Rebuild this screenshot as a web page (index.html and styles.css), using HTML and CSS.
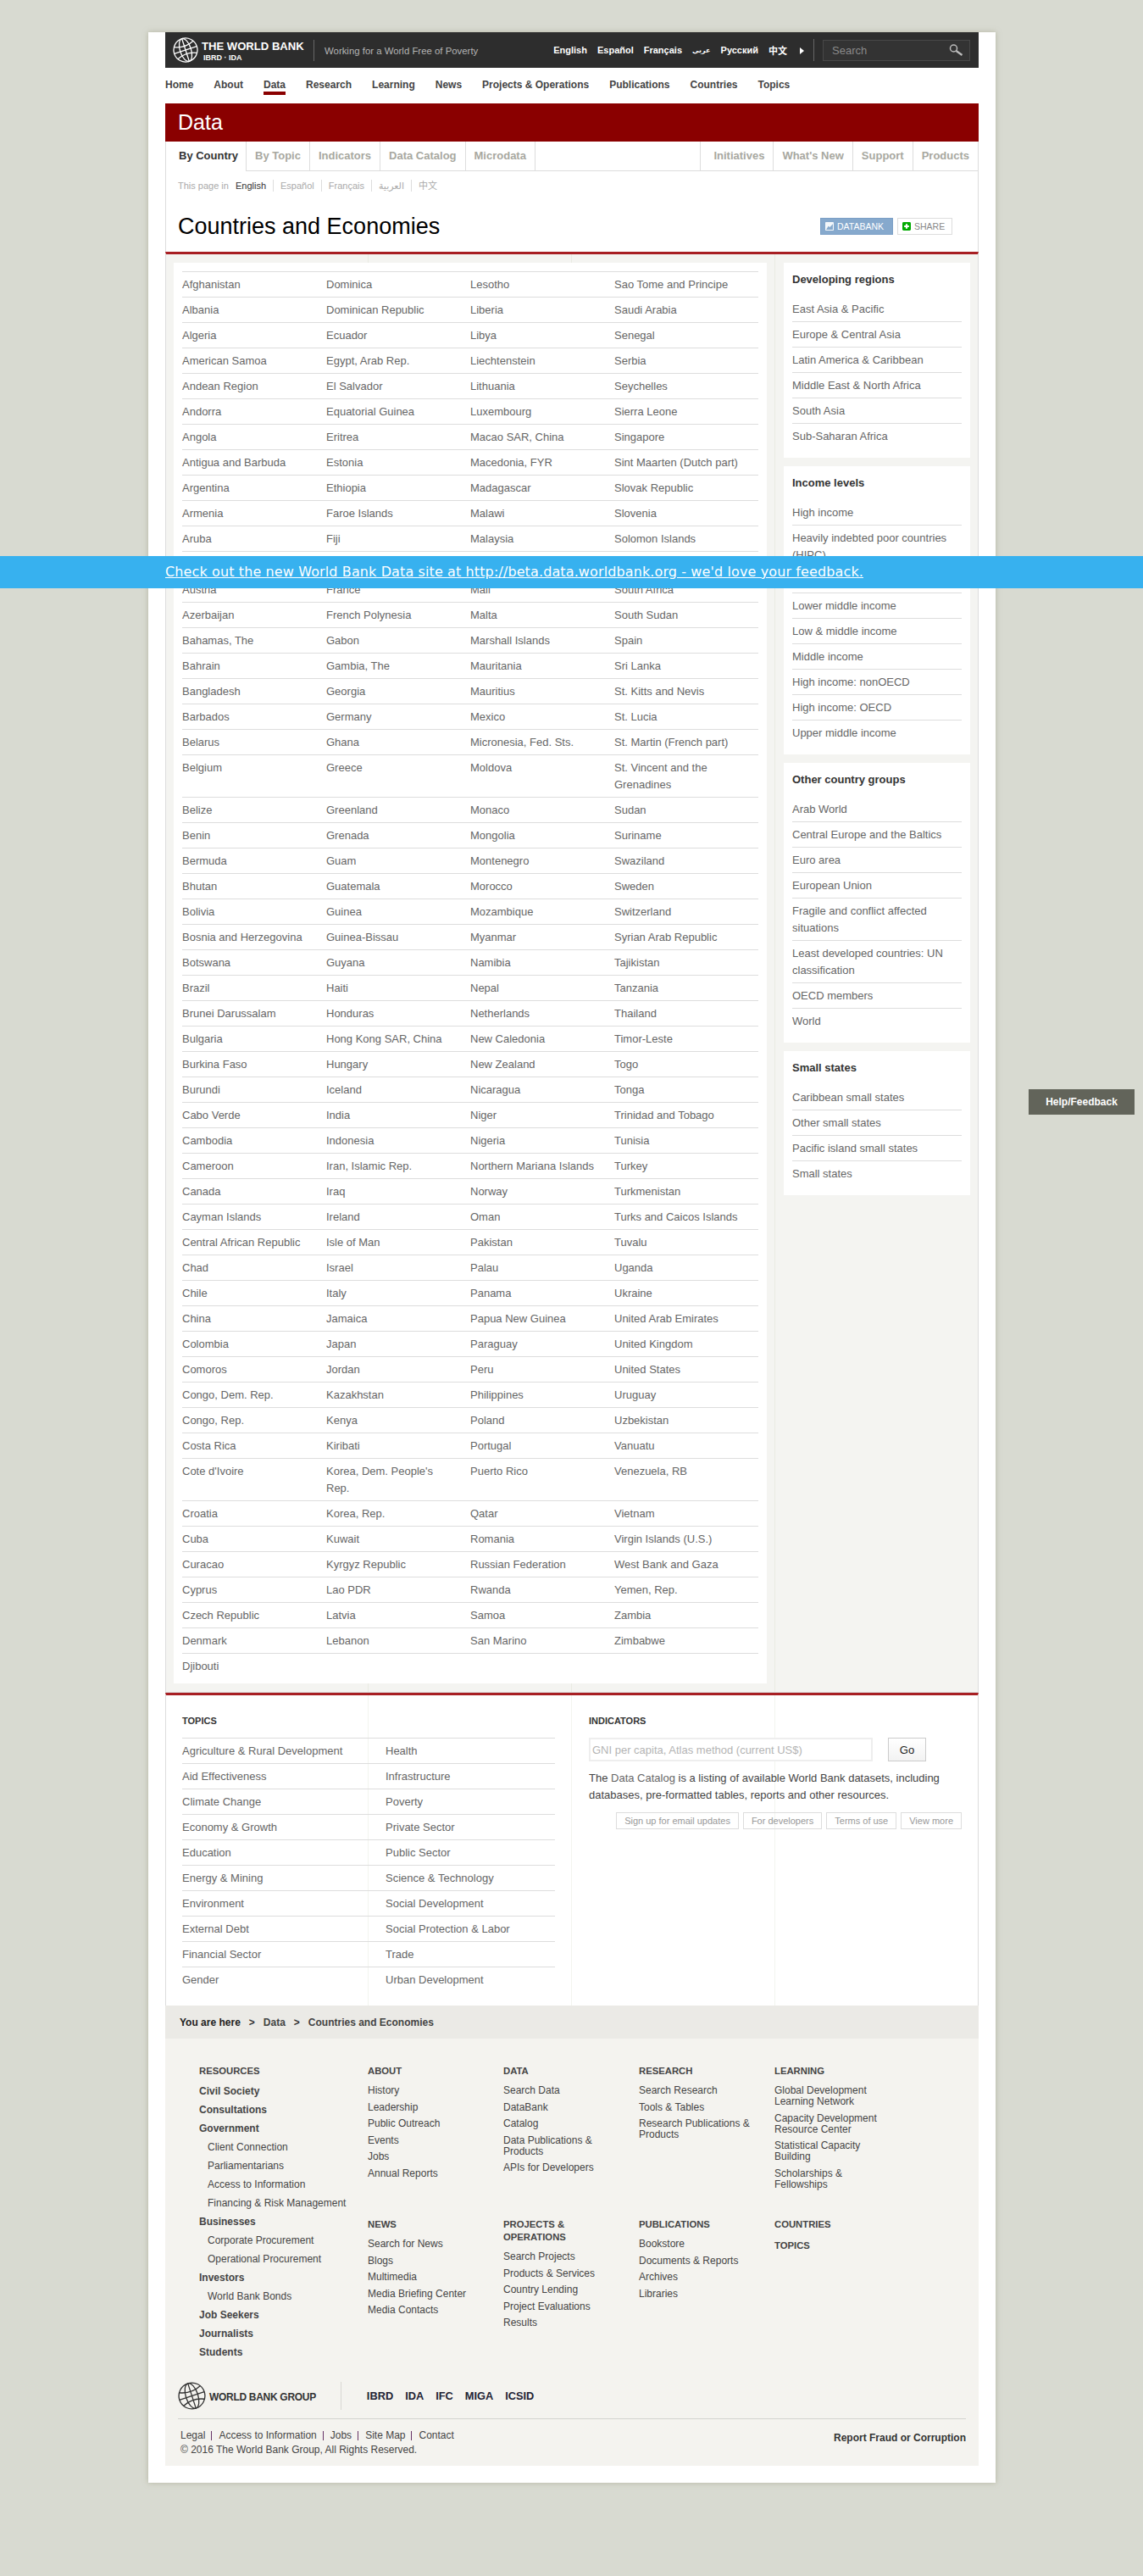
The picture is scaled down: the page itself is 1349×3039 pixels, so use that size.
FILE: index.html
```html
<!DOCTYPE html>
<html lang="en">
<head>
<meta charset="utf-8">
<title>Countries and Economies | Data</title>
<link rel="stylesheet" href="styles.css">
</head>
<body>
<div class="wrapper">
  <header class="topbar">
    <svg class="globe-w" width="30" height="30" viewBox="0 0 30 30"><g fill="none" stroke="#fff" stroke-width="1.3" transform="rotate(-18 15 15)"><circle cx="15" cy="15" r="14"/><ellipse cx="15" cy="15" rx="6.5" ry="14"/><path d="M15 1V29M3 7.500Q15 13 27 7.500M1 15H29M3 22.500Q15 17 27 22.500"/></g></svg>
    <div class="brand"><div class="brand-name">THE WORLD BANK</div><div class="brand-sub">IBRD · IDA</div></div>
    <div class="tagline">Working for a World Free of Poverty</div>
    <nav class="langs">
      <a>English</a><a>Español</a><a>Français</a><a class="ar">عربي</a><a>Русский</a><a>中文</a>
      <span class="more"></span>
    </nav>
    <div class="searchbox"><span>Search</span>
      <svg width="17" height="14" viewBox="0 0 17 14"><circle cx="5.500" cy="5" r="4" fill="none" stroke="#bbb" stroke-width="1.500"/><path d="M8.500 8L15.500 13" stroke="#bbb" stroke-width="2.200" fill="none"/></svg>
    </div>
  </header>
  <nav class="mainnav">
    <a>Home</a><a>About</a><a class="on">Data</a><a>Research</a><a>Learning</a><a>News</a><a>Projects &amp; Operations</a><a>Publications</a><a>Countries</a><a>Topics</a>
  </nav>
  <div class="sitebar">Data</div>
  <nav class="tabs">
    <a class="tab active">By Country</a><a class="tab">By Topic</a><a class="tab">Indicators</a><a class="tab">Data Catalog</a><a class="tab">Microdata</a>
    <span class="tabs-fill"></span>
    <a class="tab rt first">Initiatives</a><a class="tab rt">What's New</a><a class="tab rt">Support</a><a class="tab rt">Products</a>
  </nav>
  <div class="pagehead">
    <div class="pagelangs"><span class="pl-label">This page in</span><b>English</b><a>Español</a><a>Français</a><a>العربية</a><a class="nobar">中文</a></div>
    <div class="titlerow">
      <h1>Countries and Economies</h1>
      <div class="actions">
        <a class="btn-databank"><svg width="10" height="10" viewBox="0 0 14 14"><rect x="0" y="0" width="14" height="14" rx="1" fill="#fff" opacity=".9"/><path d="M1.500 12.500L5 6.500L7.500 8.500L12.500 3V12.500Z" fill="#86a9cd"/></svg>DATABANK</a>
        <a class="btn-share"><svg width="10" height="10" viewBox="0 0 14 14"><rect width="14" height="14" rx="2" fill="#0a0"/><path d="M7 3V11M3 7H11" stroke="#fff" stroke-width="3"/></svg>SHARE</a>
      </div>
    </div>
  </div>
  <main class="content">
    <section class="panel">
      <ul class="countries">
        <li>Afghanistan</li><li>Dominica</li><li>Lesotho</li><li>Sao Tome and Principe</li>
        <li>Albania</li><li>Dominican Republic</li><li>Liberia</li><li>Saudi Arabia</li>
        <li>Algeria</li><li>Ecuador</li><li>Libya</li><li>Senegal</li>
        <li>American Samoa</li><li>Egypt, Arab Rep.</li><li>Liechtenstein</li><li>Serbia</li>
        <li>Andean Region</li><li>El Salvador</li><li>Lithuania</li><li>Seychelles</li>
        <li>Andorra</li><li>Equatorial Guinea</li><li>Luxembourg</li><li>Sierra Leone</li>
        <li>Angola</li><li>Eritrea</li><li>Macao SAR, China</li><li>Singapore</li>
        <li>Antigua and Barbuda</li><li>Estonia</li><li>Macedonia, FYR</li><li>Sint Maarten (Dutch part)</li>
        <li>Argentina</li><li>Ethiopia</li><li>Madagascar</li><li>Slovak Republic</li>
        <li>Armenia</li><li>Faroe Islands</li><li>Malawi</li><li>Slovenia</li>
        <li>Aruba</li><li>Fiji</li><li>Malaysia</li><li>Solomon Islands</li>
        <li>Australia</li><li>Finland</li><li>Maldives</li><li>Somalia</li>
        <li>Austria</li><li>France</li><li>Mali</li><li>South Africa</li>
        <li>Azerbaijan</li><li>French Polynesia</li><li>Malta</li><li>South Sudan</li>
        <li>Bahamas, The</li><li>Gabon</li><li>Marshall Islands</li><li>Spain</li>
        <li>Bahrain</li><li>Gambia, The</li><li>Mauritania</li><li>Sri Lanka</li>
        <li>Bangladesh</li><li>Georgia</li><li>Mauritius</li><li>St. Kitts and Nevis</li>
        <li>Barbados</li><li>Germany</li><li>Mexico</li><li>St. Lucia</li>
        <li>Belarus</li><li>Ghana</li><li>Micronesia, Fed. Sts.</li><li>St. Martin (French part)</li>
        <li>Belgium</li><li>Greece</li><li>Moldova</li><li>St. Vincent and the Grenadines</li>
        <li>Belize</li><li>Greenland</li><li>Monaco</li><li>Sudan</li>
        <li>Benin</li><li>Grenada</li><li>Mongolia</li><li>Suriname</li>
        <li>Bermuda</li><li>Guam</li><li>Montenegro</li><li>Swaziland</li>
        <li>Bhutan</li><li>Guatemala</li><li>Morocco</li><li>Sweden</li>
        <li>Bolivia</li><li>Guinea</li><li>Mozambique</li><li>Switzerland</li>
        <li>Bosnia and Herzegovina</li><li>Guinea-Bissau</li><li>Myanmar</li><li>Syrian Arab Republic</li>
        <li>Botswana</li><li>Guyana</li><li>Namibia</li><li>Tajikistan</li>
        <li>Brazil</li><li>Haiti</li><li>Nepal</li><li>Tanzania</li>
        <li>Brunei Darussalam</li><li>Honduras</li><li>Netherlands</li><li>Thailand</li>
        <li>Bulgaria</li><li>Hong Kong SAR, China</li><li>New Caledonia</li><li>Timor-Leste</li>
        <li>Burkina Faso</li><li>Hungary</li><li>New Zealand</li><li>Togo</li>
        <li>Burundi</li><li>Iceland</li><li>Nicaragua</li><li>Tonga</li>
        <li>Cabo Verde</li><li>India</li><li>Niger</li><li>Trinidad and Tobago</li>
        <li>Cambodia</li><li>Indonesia</li><li>Nigeria</li><li>Tunisia</li>
        <li>Cameroon</li><li>Iran, Islamic Rep.</li><li>Northern Mariana Islands</li><li>Turkey</li>
        <li>Canada</li><li>Iraq</li><li>Norway</li><li>Turkmenistan</li>
        <li>Cayman Islands</li><li>Ireland</li><li>Oman</li><li>Turks and Caicos Islands</li>
        <li>Central African Republic</li><li>Isle of Man</li><li>Pakistan</li><li>Tuvalu</li>
        <li>Chad</li><li>Israel</li><li>Palau</li><li>Uganda</li>
        <li>Chile</li><li>Italy</li><li>Panama</li><li>Ukraine</li>
        <li>China</li><li>Jamaica</li><li>Papua New Guinea</li><li>United Arab Emirates</li>
        <li>Colombia</li><li>Japan</li><li>Paraguay</li><li>United Kingdom</li>
        <li>Comoros</li><li>Jordan</li><li>Peru</li><li>United States</li>
        <li>Congo, Dem. Rep.</li><li>Kazakhstan</li><li>Philippines</li><li>Uruguay</li>
        <li>Congo, Rep.</li><li>Kenya</li><li>Poland</li><li>Uzbekistan</li>
        <li>Costa Rica</li><li>Kiribati</li><li>Portugal</li><li>Vanuatu</li>
        <li>Cote d'Ivoire</li><li>Korea, Dem. People's Rep.</li><li>Puerto Rico</li><li>Venezuela, RB</li>
        <li>Croatia</li><li>Korea, Rep.</li><li>Qatar</li><li>Vietnam</li>
        <li>Cuba</li><li>Kuwait</li><li>Romania</li><li>Virgin Islands (U.S.)</li>
        <li>Curacao</li><li>Kyrgyz Republic</li><li>Russian Federation</li><li>West Bank and Gaza</li>
        <li>Cyprus</li><li>Lao PDR</li><li>Rwanda</li><li>Yemen, Rep.</li>
        <li>Czech Republic</li><li>Latvia</li><li>Samoa</li><li>Zambia</li>
        <li>Denmark</li><li>Lebanon</li><li>San Marino</li><li>Zimbabwe</li>
        <li class="lastrow">Djibouti</li>
      </ul>
    </section>
    <aside class="sidebar">
      <div class="sidebox">
        <h3>Developing regions</h3>
        <ul>
          <li>East Asia &amp; Pacific</li><li>Europe &amp; Central Asia</li><li>Latin America &amp; Caribbean</li><li>Middle East &amp; North Africa</li><li>South Asia</li><li>Sub-Saharan Africa</li>
        </ul>
      </div>
      <div class="sidebox">
        <h3>Income levels</h3>
        <ul>
          <li>High income</li><li>Heavily indebted poor countries (HIPC)</li><li>Low income</li><li>Lower middle income</li><li>Low &amp; middle income</li><li>Middle income</li><li>High income: nonOECD</li><li>High income: OECD</li><li>Upper middle income</li>
        </ul>
      </div>
      <div class="sidebox">
        <h3>Other country groups</h3>
        <ul>
          <li>Arab World</li><li>Central Europe and the Baltics</li><li>Euro area</li><li>European Union</li><li>Fragile and conflict affected situations</li><li>Least developed countries: UN classification</li><li>OECD members</li><li>World</li>
        </ul>
      </div>
      <div class="sidebox">
        <h3>Small states</h3>
        <ul>
          <li>Caribbean small states</li><li>Other small states</li><li>Pacific island small states</li><li>Small states</li>
        </ul>
      </div>
    </aside>
  </main>
  <section class="lower">
    <div class="topics">
      <h2>TOPICS</h2>
      <ul class="topiclist">
        <li>Agriculture &amp; Rural Development</li><li>Health</li>
        <li>Aid Effectiveness</li><li>Infrastructure</li>
        <li>Climate Change</li><li>Poverty</li>
        <li>Economy &amp; Growth</li><li>Private Sector</li>
        <li>Education</li><li>Public Sector</li>
        <li>Energy &amp; Mining</li><li>Science &amp; Technology</li>
        <li>Environment</li><li>Social Development</li>
        <li>External Debt</li><li>Social Protection &amp; Labor</li>
        <li>Financial Sector</li><li>Trade</li>
        <li>Gender</li><li>Urban Development</li>
      </ul>
    </div>
    <div class="indicators">
      <h2>INDICATORS</h2>
      <div class="indform">
        <input class="indinput" type="text" placeholder="GNI per capita, Atlas method (current US$)">
        <button class="gobtn" type="button">Go</button>
      </div>
      <p class="indtext">The <a>Data Catalog</a> is a listing of available World Bank datasets, including databases, pre-formatted tables, reports and other resources.</p>
      <div class="indlinks"><a>Sign up for email updates</a><a>For developers</a><a>Terms of use</a><a>View more</a></div>
    </div>
  </section>
  <div class="crumbs"><b>You are here</b><i>&gt;</i><a>Data</a><i>&gt;</i><a>Countries and Economies</a></div>
  <footer class="footer">
    <div class="fcols">
      <div class="fres">
        <h4>RESOURCES</h4>
        <ul>
          <li class="b">Civil Society</li><li class="b">Consultations</li><li class="b">Government</li>
          <li class="s">Client Connection</li><li class="s">Parliamentarians</li><li class="s">Access to Information</li><li class="s">Financing &amp; Risk Management</li>
          <li class="b">Businesses</li><li class="s">Corporate Procurement</li><li class="s">Operational Procurement</li>
          <li class="b">Investors</li><li class="s">World Bank Bonds</li>
          <li class="b">Job Seekers</li><li class="b">Journalists</li><li class="b">Students</li>
        </ul>
      </div>
      <div class="fgrid">
        <div class="fcol"><h4>ABOUT</h4><ul><li>History</li><li>Leadership</li><li>Public Outreach</li><li>Events</li><li>Jobs</li><li>Annual Reports</li></ul></div>
        <div class="fcol"><h4>DATA</h4><ul><li>Search Data</li><li>DataBank</li><li>Catalog</li><li>Data Publications &amp; Products</li><li>APIs for Developers</li></ul></div>
        <div class="fcol"><h4>RESEARCH</h4><ul><li>Search Research</li><li>Tools &amp; Tables</li><li>Research Publications &amp; Products</li></ul></div>
        <div class="fcol"><h4>LEARNING</h4><ul><li>Global Development Learning Network</li><li>Capacity Development Resource Center</li><li>Statistical Capacity Building</li><li>Scholarships &amp; Fellowships</li></ul></div>
        <div class="fcol"><h4>NEWS</h4><ul><li>Search for News</li><li>Blogs</li><li>Multimedia</li><li>Media Briefing Center</li><li>Media Contacts</li></ul></div>
        <div class="fcol"><h4>PROJECTS &amp; OPERATIONS</h4><ul><li>Search Projects</li><li>Products &amp; Services</li><li>Country Lending</li><li>Project Evaluations</li><li>Results</li></ul></div>
        <div class="fcol"><h4>PUBLICATIONS</h4><ul><li>Bookstore</li><li>Documents &amp; Reports</li><li>Archives</li><li>Libraries</li></ul></div>
        <div class="fcol"><h4 class="h-gap">COUNTRIES</h4><h4>TOPICS</h4></div>
      </div>
    </div>
    <div class="fbrand">
      <svg width="33" height="33" viewBox="0 0 30 30"><g fill="none" stroke="#333" stroke-width="1.200" transform="rotate(-18 15 15)"><circle cx="15" cy="15" r="14"/><ellipse cx="15" cy="15" rx="6.500" ry="14"/><path d="M15 1V29M3 7.500Q15 13 27 7.500M1 15H29M3 22.500Q15 17 27 22.500"/></g></svg>
      <span class="wbg">WORLD BANK GROUP</span>
      <div class="orgs"><a>IBRD</a><a>IDA</a><a>IFC</a><a>MIGA</a><a>ICSID</a></div>
    </div>
    <div class="flegal">
      <div>
        <div class="legal-links"><a>Legal</a><a>Access to Information</a><a>Jobs</a><a>Site Map</a><a>Contact</a></div>
        <div>© 2016 The World Bank Group, All Rights Reserved.</div>
      </div>
      <a class="fraud">Report Fraud or Corruption</a>
    </div>
  </footer>
</div>
<div class="banner"><a>Check out the new World Bank Data site at http://beta.data.worldbank.org - we'd love your feedback.</a></div>
<a class="helpbtn">Help/Feedback</a>
</body>
</html>
```

FILE: styles.css
```css
* { box-sizing: border-box; }
html, body { margin: 0; padding: 0; }
body {
  position: relative;
  height: 3039px;
  background: #d8dad1;
  font-family: "Liberation Sans", Arial, "DejaVu Sans", "Noto Sans CJK SC", sans-serif;
  font-size: 13px;
  color: #444;
  overflow: hidden;
}
ul { list-style: none; margin: 0; padding: 0; }
h1, h2, h3, h4, p { margin: 0; }

.wrapper {
  width: 1000px;
  height: 2891px;
  margin: 38px 0 0 175px;
  padding: 0 20px;
  background: #fff;
  box-shadow: 0 0 6px rgba(150, 150, 120, .55);
}

/* top bar */
.topbar {
  display: flex;
  align-items: center;
  height: 42px;
  background: #2d2d2d;
  color: #fff;
}
.globe-w { margin-left: 9px; flex: none; }
.brand { margin-left: 4px; width: 132px; height: 30px; padding-top: 3px; }
.brand-name { font-size: 13.100px; line-height: 15px; font-weight: 700; white-space: nowrap; }
.brand-sub { font-size: 9px; line-height: 9px; font-weight: 700; margin: 2px 0 0 2px; }
.tagline {
  height: 25px;
  line-height: 26px;
  padding-left: 12px;
  border-left: 1px solid #666;
  font-size: 11.400px;
  color: #b5b5b5;
  white-space: nowrap;
}
.langs { display: flex; align-items: center; gap: 12px; margin-left: auto; font-size: 11px; font-weight: 700; height: 26px; padding-right: 11px; border-right: 1px solid #666; }
.langs .ar { font-size: 8px; }
.more { width: 0; height: 0; margin-left: 3px; margin-top: 2px; border-left: 5px solid #fff; border-top: 4px solid transparent; border-bottom: 4px solid transparent; }
.searchbox {
  display: flex; align-items: center; justify-content: space-between;
  width: 174px; height: 25px;
  margin: 0 10px;
  padding: 0 7px 0 10px;
  border: 1px solid #484848;
  background: #333;
  color: #8a8a8a;
  font-size: 13px;
}

/* main nav */
.mainnav { display: flex; gap: 24px; height: 42px; padding-top: 13px; font-size: 12px; font-weight: 700; color: #444; }
.mainnav a { display: block; height: 19px; line-height: 15px; }
.mainnav .on { border-bottom: 4px solid #8a0000; }

.sitebar { height: 45px; padding-left: 15px; background: #8a0000; color: #fff; font-size: 25px; line-height: 45px; }

/* tabs */
.tabs { display: flex; height: 35px; border-bottom: 1px solid #ddd; border-right: 1px solid #ddd; font-size: 13px; font-weight: 700; color: #a8a8a0; line-height: 33px; white-space: nowrap; }
.tab { display: block; padding: 0 10px; border-right: 1px solid #ddd; }
.tab.active { width: 96px; height: 35px; padding-left: 15px; padding-right: 0; border-left: 1px solid #ddd; background: #fff; color: #333; position: relative; z-index: 1; }
.tabs-fill { flex: 1; border-right: 1px solid #ddd; }
.tab.first { padding-left: 15px; }
.tab:last-child { border-right: 0; }

.pagehead { height: 95px; border-left: 1px solid #ddd; border-right: 1px solid #ddd; }
.pagelangs { display: flex; align-items: center; height: 14px; position: relative; top: 10px; padding-left: 14px; font-size: 11px; color: #aaa; }
.pl-label { margin-right: 8px; }
.pagelangs b { font-weight: 400; color: #333; padding-right: 8px; border-right: 1px solid #ddd; line-height: 14px; margin-right: 8px; }
.pagelangs a { padding-right: 8px; margin-right: 8px; border-right: 1px solid #ddd; line-height: 14px; }
.pagelangs a.nobar { border-right: 0; }
.titlerow { display: flex; align-items: center; justify-content: space-between; margin-top: 31px; padding: 0 30px 0 14px; height: 40px; }
h1 { font-size: 27px; line-height: 40px; font-weight: 400; color: #000; white-space: nowrap; }
.actions { display: flex; gap: 5px; font-size: 10.500px; }
.actions a { display: flex; align-items: center; gap: 4px; height: 20px; }
.btn-databank { width: 86px; padding-left: 5px; background: #86a9cd; border: 1px solid #7c9fc6; color: #fff; }
.btn-share { width: 65px; padding-left: 5px; background: #fff; border: 1px solid #ddd; color: #888; }

/* content */
.content {
  display: flex;
  gap: 20px;
  padding: 10px 9px;
  border-top: 3px solid #a81f23;
  border-left: 1px solid #ddd;
  border-right: 1px solid #ddd;
  border-bottom: 1px solid #ddd;
  background-color: #f4f4f1;
  background-image: linear-gradient(#e9ebe2, #e9ebe2), linear-gradient(#e9ebe2, #e9ebe2), linear-gradient(#e9ebe2, #e9ebe2);
  background-size: 1px 100%;
  background-repeat: no-repeat;
  background-position: 238px 0, 478px 0, 718px 0;
}
.panel { width: 700px; padding: 10px 10px 6px; background: #fff; }
.countries { display: grid; grid-template-columns: repeat(4, 170px); font-size: 13px; color: #666; }
.countries li { padding: 5px 20px 4px 0; line-height: 20px; border-top: 1px solid #ddd; }
.countries .lastrow { grid-column: 1 / -1; }
.sidebar { width: 220px; }
.sidebox { padding: 10px; margin-bottom: 10px; background: #fff; }
.sidebox:last-child { margin-bottom: 0; }
.sidebox h3 { font-size: 13px; line-height: 20px; font-weight: 700; color: #333; margin-bottom: 10px; }
.sidebox li { padding: 5px 0 4px; line-height: 20px; border-bottom: 1px solid #ddd; color: #666; }
.sidebox li:last-child { border-bottom-color: transparent; }

/* lower */
.lower {
  display: flex;
  height: 369px;
  border-top: 3px solid #a81f23;
  border-left: 1px solid #ddd;
  border-right: 1px solid #ddd;
  background-image: linear-gradient(#f3f5ef, #f3f5ef), linear-gradient(#f3f5ef, #f3f5ef), linear-gradient(#f3f5ef, #f3f5ef);
  background-size: 1px 100%;
  background-repeat: no-repeat;
  background-position: 238px 0, 478px 0, 718px 0;
}
.lower h2 { padding-top: 20px; font-size: 11px; line-height: 20px; font-weight: 700; color: #333; margin-bottom: 10px; }
.topics { width: 499px; padding-left: 19px; }
.topiclist { display: grid; grid-template-columns: 240px 200px; color: #666; }
.topiclist li { padding: 5px 0 4px; line-height: 20px; border-top: 1px solid #ddd; }
.indicators { width: 440px; }
.indform { display: flex; gap: 18px; height: 28px; }
.indinput { width: 335px; height: 28px; padding: 0 2px; border: 2px solid #eee; font: 13px "Liberation Sans", Arial, sans-serif; outline: 0; background: #fff; }
.indinput::placeholder { color: #b4b4b4; opacity: 1; }
.gobtn { width: 45px; height: 28px; padding: 0; border: 1px solid #ccc; background: linear-gradient(#fff, #f2f2f2); color: #222; font: 13px "Liberation Sans", Arial, sans-serif; }
.indtext { margin-top: 10px; line-height: 20px; font-size: 13px; color: #444; }
.indtext a { color: #666; }
.indlinks { display: flex; justify-content: flex-end; gap: 5px; margin-top: 10px; font-size: 11px; color: #999; }
.indlinks a { display: block; height: 20px; padding: 0 9px; line-height: 18px; border: 1px solid #ddd; }

.crumbs { display: flex; align-items: center; height: 39px; padding-left: 17px; background: #ebeae6; font-size: 12px; font-weight: 700; color: #444; }
.crumbs b { color: #222; }
.crumbs i { font-style: normal; margin: 0 10px; color: #333; }

/* footer */
.footer { height: 504px; padding-top: 31px; background: #f4f3ef; font-size: 12px; color: #444; }
.fcols { display: flex; padding-left: 40px; height: 374px; }
.fres { width: 199px; }
.footer h4 { font-size: 11.300px; line-height: 15px; font-weight: 700; color: #444; }
.fres ul { margin-top: 5px; }
.fres li { line-height: 22px; white-space: nowrap; }
.fres .b { font-weight: 700; }
.fres .s { padding-left: 10px; }
.fgrid { display: grid; grid-template-columns: repeat(4, 140px); grid-template-rows: 181px auto; column-gap: 20px; }
.fcol ul { margin-top: 9px; }
.fcol li { line-height: 13px; margin-bottom: 6.500px; }
.h-gap { margin-bottom: 10px; }
.fbrand { display: flex; align-items: center; height: 44px; margin: 0 15px; padding-bottom: 10px; border-bottom: 1px solid #d4d4d0; font-size: 12.800px; }
.wbg { margin-left: 4px; font-size: 12px; font-weight: 700; color: #333; letter-spacing: -.3px; white-space: nowrap; padding-top: 2px; }
.orgs { display: flex; gap: 14px; align-items: center; height: 33px; margin-left: 29px; padding-left: 30px; border-left: 1px solid #d8d8d4; font-weight: 700; color: #223; }
.flegal { display: flex; justify-content: space-between; align-items: flex-start; margin: 0 15px; padding: 11px 0 0 3px; line-height: 17px; color: #444; }
.legal-links { display: flex; }
.legal-links a { padding-right: 8px; margin-right: 8px; }
.legal-links a:not(:last-child) { background: linear-gradient(#636, #636) right 3px / 1px 11px no-repeat; }
.fraud { margin-top: 3px; font-weight: 700; color: #333; }

/* overlays */
.banner {
  position: absolute;
  left: 0; right: 0; top: 656px;
  height: 38px;
  padding-left: 195px;
  background: #37b1ef;
  font-family: "DejaVu Sans", Verdana, sans-serif;
  font-size: 16px;
  letter-spacing: .115px;
  line-height: 38px;
  color: #fff;
  text-decoration: underline;
}
.helpbtn {
  position: absolute;
  left: 1214px; top: 1285px;
  width: 125px; height: 30px;
  background: #62645a;
  color: #fff;
  font-size: 12px;
  font-weight: 700;
  line-height: 30px;
  text-align: center;
}
```
